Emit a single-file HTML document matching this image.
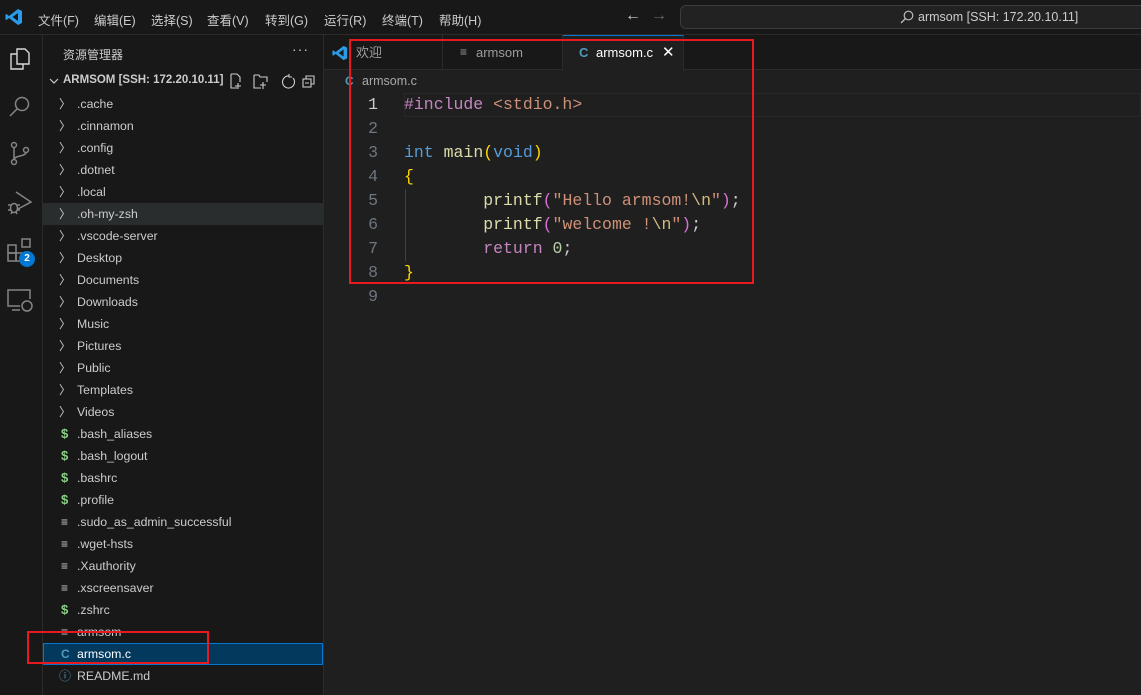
<!DOCTYPE html>
<html><head><meta charset="utf-8"><style>
*{margin:0;padding:0;box-sizing:border-box}
body{width:1141px;height:695px;background:#1f1f1f;overflow:hidden;position:relative;font-family:"Liberation Sans","Noto Sans CJK SC",sans-serif;color:#ccc;font-size:13px}
.abs{position:absolute}
#title{left:0;top:0;width:1141px;height:35px;background:#181818;border-bottom:1px solid #2b2b2b}
.menu{top:10px;font-size:12.5px;color:#ccc}
#search{left:680px;top:5px;width:470px;height:24px;border:1px solid #3c3c3c;border-radius:6px;background:#222}
#act{left:0;top:35px;width:43px;height:660px;background:#181818;border-right:1px solid #2b2b2b}
#side{left:43px;top:35px;width:281px;height:660px;background:#181818;border-right:1px solid #2b2b2b}
.row{position:absolute;left:0;width:280px;height:22px;line-height:22px;font-size:12.3px;color:#ccc}
.row .t{position:absolute;left:34px}
.row .i{position:absolute;left:16px;font-size:12px}
#tabs{left:324px;top:35px;width:817px;height:35px;background:#181818;border-bottom:1px solid #2b2b2b}
.tab{position:absolute;top:0;height:35px;line-height:35px;font-size:13px;color:#9d9d9d;border-right:1px solid #2b2b2b}
.code{position:absolute;left:404px;font-family:"Liberation Mono",monospace;font-size:16.5px;white-space:pre;height:24px;line-height:24px}
.ln{position:absolute;left:340px;width:38px;text-align:right;font-family:"Liberation Mono",monospace;font-size:16.5px;color:#6e7681;height:24px;line-height:24px}
.red{position:absolute;border:2px solid #e8191f}
</style></head><body>
<div id="title" class="abs">
<svg class="abs" style="left:5px;top:8px" width="18" height="18" viewBox="0 0 18 18"><path d="M13 1 L17 3 V15 L13 17 L4 10 L1.5 12 L0.5 11.5 V6.5 L1.5 6 L4 8 Z M13 5 L7.5 9 L13 13 Z" fill="#2b9be8"/></svg>
<span class="abs menu" style="left:38px">文件(F)</span>
<span class="abs menu" style="left:94px">编辑(E)</span>
<span class="abs menu" style="left:151px">选择(S)</span>
<span class="abs menu" style="left:207px">查看(V)</span>
<span class="abs menu" style="left:265px">转到(G)</span>
<span class="abs menu" style="left:324px">运行(R)</span>
<span class="abs menu" style="left:382px">终端(T)</span>
<span class="abs menu" style="left:439px">帮助(H)</span>
<span class="abs" style="left:625px;top:7px;font-size:16px;color:#ccc">←</span>
<span class="abs" style="left:651px;top:7px;font-size:16px;color:#666">→</span>
<div id="search" class="abs"></div>
<svg class="abs" style="left:900px;top:10px" width="14" height="14" viewBox="0 0 14 14"><circle cx="8.5" cy="5.5" r="4.3" stroke="#bbb" fill="none" stroke-width="1.2"/><path d="M5.5 8.5 L1 13" stroke="#bbb" stroke-width="1.3"/></svg>
<span class="abs" style="left:918px;top:10px;font-size:12.5px;color:#ccc">armsom [SSH: 172.20.10.11]</span>
</div>
<div id="act" class="abs">
<svg class="abs" style="left:8px;top:12px" width="24" height="24" viewBox="0 0 24 24" fill="none" stroke="#d7d7d7" stroke-width="1.4"><path d="M9 2h8l4 4v11H9z"/><path d="M9 7H3v15h12v-5"/></svg>
<svg class="abs" style="left:8px;top:60px" width="24" height="24" viewBox="0 0 24 24" fill="none" stroke="#858585" stroke-width="1.5"><circle cx="14" cy="9" r="6.5"/><path d="M9.5 13.5 L2 21"/></svg>
<svg class="abs" style="left:8px;top:106px" width="24" height="26" viewBox="0 0 24 26" fill="none" stroke="#858585" stroke-width="1.5"><circle cx="6" cy="4" r="2.5"/><circle cx="6" cy="21" r="2.5"/><circle cx="18" cy="9" r="2.5"/><path d="M6 6.5v12M18 11.5c0 4-12 3-12 7"/></svg>
<svg class="abs" style="left:6px;top:154px" width="28" height="28" viewBox="0 0 28 28" fill="none" stroke="#858585" stroke-width="1.5"><path d="M10 3 L25 13 L12 20"/><ellipse cx="8" cy="19" rx="3.5" ry="4.5"/><path d="M2 16h3M2 21h3M11 16h3M11 21h3M5 25l1-2M11 25l-1-2"/></svg>
<svg class="abs" style="left:6px;top:202px" width="28" height="28" viewBox="0 0 28 28" fill="none" stroke="#858585" stroke-width="1.5"><rect x="2" y="8" width="8" height="8"/><rect x="2" y="16" width="8" height="8"/><rect x="10" y="16" width="8" height="8"/><rect x="16" y="2" width="8" height="8"/></svg>
<div class="abs" style="left:19px;top:216px;width:16px;height:16px;border-radius:8px;background:#0078d4;color:#fff;font-size:10px;font-weight:bold;text-align:center;line-height:16px">2</div>
<svg class="abs" style="left:6px;top:252px" width="28" height="26" viewBox="0 0 28 26" fill="none" stroke="#858585" stroke-width="1.5"><path d="M14 19H2V3h22v9"/><path d="M6 23h8"/><circle cx="21" cy="19" r="5"/></svg>
</div>
<div id="side" class="abs">
<span class="abs" style="left:20px;top:11px;font-size:12px;color:#ccc">资源管理器</span>
<span class="abs" style="left:249px;top:6px;font-size:14px;color:#ccc;letter-spacing:1px">···</span>
<svg class="abs" style="left:6px;top:42px" width="10" height="8" viewBox="0 0 10 8"><path d="M1 2 L5 6 L9 2" stroke="#ccc" fill="none" stroke-width="1.2"/></svg>
<span class="abs" style="left:20px;top:39px;font-size:11.5px;font-weight:bold;color:#ccc">ARMSOM [SSH: 172.20.10.11]</span>
<svg class="abs" style="left:186px;top:38px" width="90" height="16" viewBox="0 0 90 16" fill="none" stroke="#ccc" stroke-width="1.1"><path d="M2 1h6l3 3v5M2 1v14h6M9 10v6M6 13h6"/><path d="M25 2h5l1 2h7v5M25 2v13h7M34 9v7M31 12h6"/><path d="M60 3a6 6 0 1 0 4 2M60 1v3h3"/><rect x="74" y="6" width="8" height="8"/><path d="M77 6V3h8v8h-3M76 10h4"/></svg>
<div style="position:absolute;left:0;top:58px;width:281px">
<div class="row" style="top:0"><span class="i">〉</span><span class="t">.cache</span></div>
<div class="row" style="top:22px"><span class="i">〉</span><span class="t">.cinnamon</span></div>
<div class="row" style="top:44px"><span class="i">〉</span><span class="t">.config</span></div>
<div class="row" style="top:66px"><span class="i">〉</span><span class="t">.dotnet</span></div>
<div class="row" style="top:88px"><span class="i">〉</span><span class="t">.local</span></div>
<div class="row" style="top:110px;background:#2a2d2e"><span class="i">〉</span><span class="t">.oh-my-zsh</span></div>
<div class="row" style="top:132px"><span class="i">〉</span><span class="t">.vscode-server</span></div>
<div class="row" style="top:154px"><span class="i">〉</span><span class="t">Desktop</span></div>
<div class="row" style="top:176px"><span class="i">〉</span><span class="t">Documents</span></div>
<div class="row" style="top:198px"><span class="i">〉</span><span class="t">Downloads</span></div>
<div class="row" style="top:220px"><span class="i">〉</span><span class="t">Music</span></div>
<div class="row" style="top:242px"><span class="i">〉</span><span class="t">Pictures</span></div>
<div class="row" style="top:264px"><span class="i">〉</span><span class="t">Public</span></div>
<div class="row" style="top:286px"><span class="i">〉</span><span class="t">Templates</span></div>
<div class="row" style="top:308px"><span class="i">〉</span><span class="t">Videos</span></div>
<div class="row" style="top:330px"><span class="i" style="color:#89d185;font-weight:bold;font-size:13px;left:18px">$</span><span class="t">.bash_aliases</span></div>
<div class="row" style="top:352px"><span class="i" style="color:#89d185;font-weight:bold;font-size:13px;left:18px">$</span><span class="t">.bash_logout</span></div>
<div class="row" style="top:374px"><span class="i" style="color:#89d185;font-weight:bold;font-size:13px;left:18px">$</span><span class="t">.bashrc</span></div>
<div class="row" style="top:396px"><span class="i" style="color:#89d185;font-weight:bold;font-size:13px;left:18px">$</span><span class="t">.profile</span></div>
<div class="row" style="top:418px"><span class="i" style="left:18px">≡</span><span class="t">.sudo_as_admin_successful</span></div>
<div class="row" style="top:440px"><span class="i" style="left:18px">≡</span><span class="t">.wget-hsts</span></div>
<div class="row" style="top:462px"><span class="i" style="left:18px">≡</span><span class="t">.Xauthority</span></div>
<div class="row" style="top:484px"><span class="i" style="left:18px">≡</span><span class="t">.xscreensaver</span></div>
<div class="row" style="top:506px"><span class="i" style="color:#89d185;font-weight:bold;font-size:13px;left:18px">$</span><span class="t">.zshrc</span></div>
<div class="row" style="top:528px"><span class="i" style="left:18px">≡</span><span class="t">armsom</span></div>
<div class="row" style="top:550px;background:#04395e;border:1px solid #0078d4;color:#fff"><span class="i" style="color:#519aba;font-weight:bold;left:17px;top:-1px">C</span><span class="t" style="top:-1px;left:33px">armsom.c</span></div>
<div class="row" style="top:572px"><span class="i" style="color:#519aba;left:16px">ⓘ</span><span class="t">README.md</span></div>
</div>
</div>
<div id="tabs" class="abs">
<div class="tab" style="left:0;width:119px"><svg class="abs" style="left:8px;top:10px" width="16" height="16" viewBox="0 0 18 18"><path d="M13 1 L17 3 V15 L13 17 L4 10 L1.5 12 L0.5 11.5 V6.5 L1.5 6 L4 8 Z M13 5 L7.5 9 L13 13 Z" fill="#2b9be8"/></svg><span class="abs" style="left:32px">欢迎</span></div>
<div class="tab" style="left:119px;width:120px"><span class="abs" style="left:17px;font-size:12px">≡</span><span class="abs" style="left:33px">armsom</span></div>
<div class="tab" style="left:239px;width:121px;background:#1f1f1f;color:#fff;border-top:1px solid #0078d4;height:36px"><span class="abs" style="left:16px;top:-1px;color:#519aba;font-weight:bold">C</span><span class="abs" style="left:33px;top:-1px">armsom.c</span><span class="abs" style="left:99px;top:-1px;font-size:15px">✕</span></div>
</div>
<span class="abs" style="left:345px;top:74px;font-size:12px;color:#519aba;font-weight:bold">C</span>
<span class="abs" style="left:362px;top:74px;font-size:12.5px;color:#a9a9a9">armsom.c</span>
<div class="abs" style="left:404px;top:93px;width:737px;height:24px;border:1px solid #282828"></div>
<div class="abs" style="left:405px;top:189px;width:1px;height:72px;background:#404040"></div>
<div class="ln" style="top:93px;color:#ccc">1</div>
<div class="ln" style="top:117px">2</div>
<div class="ln" style="top:141px">3</div>
<div class="ln" style="top:165px">4</div>
<div class="ln" style="top:189px">5</div>
<div class="ln" style="top:213px">6</div>
<div class="ln" style="top:237px">7</div>
<div class="ln" style="top:261px">8</div>
<div class="ln" style="top:285px">9</div>
<div class="code" style="top:93px"><span style="color:#c586c0">#include</span> <span style="color:#ce9178">&lt;stdio.h&gt;</span></div>
<div class="code" style="top:141px"><span style="color:#569cd6">int</span> <span style="color:#dcdcaa">main</span><span style="color:#ffd700">(</span><span style="color:#569cd6">void</span><span style="color:#ffd700">)</span></div>
<div class="code" style="top:165px;color:#ffd700">{</div>
<div class="code" style="top:189px">        <span style="color:#dcdcaa">printf</span><span style="color:#da70d6">(</span><span style="color:#ce9178">"Hello armsom!</span><span style="color:#d7ba7d">\n</span><span style="color:#ce9178">"</span><span style="color:#da70d6">)</span><span style="color:#ccc">;</span></div>
<div class="code" style="top:213px">        <span style="color:#dcdcaa">printf</span><span style="color:#da70d6">(</span><span style="color:#ce9178">"welcome !</span><span style="color:#d7ba7d">\n</span><span style="color:#ce9178">"</span><span style="color:#da70d6">)</span><span style="color:#ccc">;</span></div>
<div class="code" style="top:237px">        <span style="color:#c586c0">return</span> <span style="color:#b5cea8">0</span><span style="color:#ccc">;</span></div>
<div class="code" style="top:261px;color:#ffd700">}</div>
<div class="red" style="left:349px;top:39px;width:405px;height:245px"></div>
<div class="red" style="left:27px;top:631px;width:182px;height:33px"></div>
</body></html>
